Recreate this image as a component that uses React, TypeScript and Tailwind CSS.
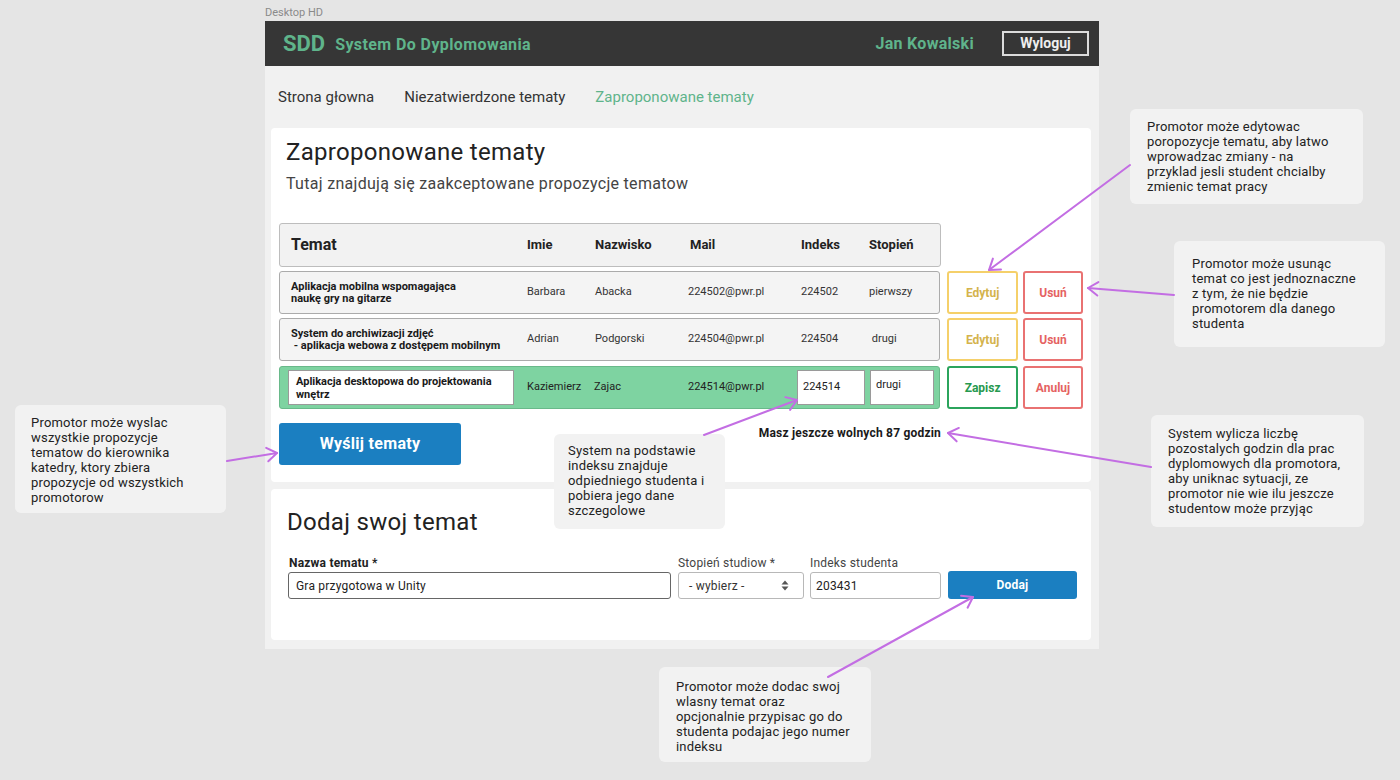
import React from "react";

const ARROWS = [
  { x1: 1130, y1: 165, x2: 989, y2: 270 },
  { x1: 1174, y1: 295, x2: 1088, y2: 288 },
  { x1: 1151, y1: 467, x2: 948, y2: 433 },
  { x1: 704, y1: 435, x2: 797, y2: 400 },
  { x1: 828, y1: 677, x2: 973, y2: 597 },
  { x1: 227, y1: 461, x2: 277, y2: 453 },
];

const ROWS = [
  {
    topic: ["Aplikacja mobilna wspomagająca", "naukę gry na gitarze"],
    imie: "Barbara",
    nazwisko: "Abacka",
    mail: "224502@pwr.pl",
    indeks: "224502",
    stopien: "pierwszy",
  },
  {
    topic: ["System do archiwizacji zdjęć", "\u00a0- aplikacja webowa z dostępem mobilnym"],
    imie: "Adrian",
    nazwisko: "Podgorski",
    mail: "224504@pwr.pl",
    indeks: "224504",
    stopien: "\u00a0drugi",
  },
];

function Arrow({ x1, y1, x2, y2 }: { x1: number; y1: number; x2: number; y2: number }) {
  const a = Math.atan2(y2 - y1, x2 - x1);
  const len = 12;
  const s = 0.6;
  const p1 = [x2 - len * Math.cos(a - s), y2 - len * Math.sin(a - s)];
  const p2 = [x2 - len * Math.cos(a + s), y2 - len * Math.sin(a + s)];
  return (
    <g stroke="#c36ee3" strokeWidth={2} fill="none" strokeLinecap="round" strokeLinejoin="round">
      <line x1={x1} y1={y1} x2={x2} y2={y2} />
      <polyline points={`${p1[0]},${p1[1]} ${x2},${y2} ${p2[0]},${p2[1]}`} />
    </g>
  );
}

function Note({ className, lines }: { className: string; lines: string[] }) {
  return (
    <div className={`absolute rounded-md bg-[#f2f2f2] text-[13px] leading-[15px] tracking-[0.2px] text-[#222] ${className}`}>
      {lines.map((l) => (
        <div key={l}>{l}</div>
      ))}
    </div>
  );
}

const COLS = "grid grid-cols-[236px_68px_95px_111px_68px_1fr] items-center";

export default function App() {
  return (
    <div className="relative h-[780px] w-[1400px] overflow-hidden bg-[#e5e5e5] font-['Roboto','Liberation_Sans',sans-serif]">
      <div className="absolute left-[265px] top-[5px] text-[11px] text-[#8a8a8a]">Desktop HD</div>

      {/* Frame */}
      <div className="absolute left-[265px] top-[21px] flex h-[628px] w-[834px] flex-col bg-[#f1f1f1]">
        <header className="flex h-[45px] items-center bg-[#363636] pl-[18px] pr-[10px]">
          <span className="text-[22px] font-bold text-[#5fb48b]">SDD</span>
          <span className="ml-[10px] mt-[3px] text-[16px] font-bold tracking-[0.4px] text-[#5fb48b]">
            System Do Dyplomowania
          </span>
          <span className="ml-auto text-[16px] font-bold tracking-[0.3px] text-[#5fb48b]">Jan Kowalski</span>
          <button className="ml-[28px] h-[25px] w-[87px] border-2 border-[#dcdcdc] text-[14px] font-bold text-[#eeeeee]">
            Wyloguj
          </button>
        </header>

        <nav className="flex h-[62px] items-center gap-[30px] pl-[13px] text-[15px] text-[#333]">
          <span>Strona głowna</span>
          <span>Niezatwierdzone tematy</span>
          <span className="text-[#5fb48b]">Zaproponowane tematy</span>
        </nav>

        {/* Card: proposed topics */}
        <section className="ml-[6px] w-[820px] rounded bg-white px-[8px] pb-[17px] pt-[10px]">
          <h1 className="pl-[7px] text-[24px] leading-[28px] tracking-[0.3px] text-[#222]">Zaproponowane tematy</h1>
          <p className="mt-[8px] pl-[7px] text-[16px] leading-[20px] tracking-[0.3px] text-[#444]">
            Tutaj znajdują się zaakceptowane propozycje tematow
          </p>

          <div className="mt-[29px] flex flex-col gap-[4px]">
            <div className="flex">
              <div className={`${COLS} h-[44px] w-[662px] rounded-[3px] border border-[#bdbdbd] bg-[#f2f2f2] pl-[11px] text-[13px] font-bold text-[#222]`}>
                <span className="text-[16px]">Temat</span>
                <span>Imie</span>
                <span>Nazwisko</span>
                <span>Mail</span>
                <span>Indeks</span>
                <span>Stopień</span>
              </div>
            </div>

            {ROWS.map((r) => (
              <div key={r.mail} className="flex gap-[5px]">
                <div className={`${COLS} h-[43px] w-[662px] rounded-[3px] border border-[#ababab] bg-[#f4f4f4] pl-[11px] text-[11px] text-[#333]`}>
                  <div className="text-[11px] font-bold leading-[12px] text-[#1a1a1a]">
                    {r.topic.map((t) => (
                      <div key={t} className="whitespace-pre">{t}</div>
                    ))}
                  </div>
                  <span>{r.imie}</span>
                  <span>{r.nazwisko}</span>
                  <span className="-ml-[2px]">{r.mail}</span>
                  <span>{r.indeks}</span>
                  <span className="whitespace-pre">{r.stopien}</span>
                </div>
                <button className="ml-[2px] h-[43px] w-[71px] rounded-[3px] border-2 border-[#f5d06a] text-[12px] font-bold text-[#d4b34c]">
                  Edytuj
                </button>
                <button className="h-[43px] w-[60px] rounded-[3px] border-2 border-[#e97272] text-[12px] font-bold text-[#e56262]">
                  Usuń
                </button>
              </div>
            ))}

            <div className="mt-[1px] flex gap-[5px]">
              <div className="flex h-[43px] w-[662px] items-center rounded-[3px] border border-[#69b98a] bg-[#7ed3a1] pl-[8px] text-[11px] text-[#222]">
                <div className="flex h-[35px] w-[226px] flex-col justify-center border border-[#9a9a9a] bg-white pl-[7px] text-[11px] font-bold leading-[13px] text-[#1a1a1a]">
                  <div>Aplikacja desktopowa do projektowania</div>
                  <div>wnętrz</div>
                </div>
                <span className="ml-[13px] w-[67px]">Kaziemierz</span>
                <span className="w-[94px]">Zajac</span>
                <span className="w-[109px]">224514@pwr.pl</span>
                <div className="flex h-[35px] w-[68px] items-center border border-[#9a9a9a] bg-white pl-[5px]">224514</div>
                <div className="ml-[5px] flex h-[35px] w-[64px] items-start border border-[#9a9a9a] bg-white pl-[5px] pt-[6px]">
                  drugi
                </div>
              </div>
              <button className="ml-[2px] h-[43px] w-[71px] rounded-[3px] border-2 border-[#2ba45c] text-[12px] font-bold text-[#27994f]">
                Zapisz
              </button>
              <button className="h-[43px] w-[60px] rounded-[3px] border-2 border-[#e97272] text-[12px] font-bold text-[#e56262]">
                Anuluj
              </button>
            </div>
          </div>

          <div className="mt-[14px] flex w-[662px] items-start justify-between">
            <button className="h-[42px] w-[182px] rounded-[3px] bg-[#1b7fc1] text-[16px] font-bold tracking-[0.3px] text-white">
              Wyślij tematy
            </button>
            <span className="mt-[1px] text-[12px] font-bold tracking-[0.2px] text-[#1a1a1a]">
              Masz jeszcze wolnych 87 godzin
            </span>
          </div>
        </section>

        {/* Card: add topic */}
        <section className="ml-[6px] mt-[7px] w-[820px] rounded bg-white pb-[41px] pl-[17px] pt-[19px]">
          <h2 className="-ml-px text-[24px] leading-[28px] tracking-[0.3px] text-[#222]">Dodaj swoj temat</h2>
          <div className="mt-[19px] flex items-end gap-[6px] text-[12px] tracking-[0.2px]">
            <label className="flex flex-col">
              <span className="pl-[1px] font-bold leading-[16px] text-[#222]">Nazwa tematu *</span>
              <div className="mt-px flex h-[27px] w-[383px] items-center rounded-[3px] border border-[#666] pl-[7px] text-[#222]">
                Gra przygotowa w Unity
              </div>
            </label>
            <label className="ml-px flex flex-col">
              <span className="leading-[16px] text-[#444]">Stopień studiow *</span>
              <div className="mt-px flex h-[27px] w-[126px] items-center rounded-[3px] border border-[#b8b8b8] pl-[10px] pr-[14px] text-[#333]">
                - wybierz -
                <svg className="ml-auto" width="8" height="11" viewBox="0 0 8 11">
                  <path d="M4 0.5 L7.5 4.5 H0.5 Z M4 10.5 L7.5 6.5 H0.5 Z" fill="#555" />
                </svg>
              </div>
            </label>
            <label className="flex flex-col">
              <span className="leading-[16px] text-[#444]">Indeks studenta</span>
              <div className="mt-px flex h-[27px] w-[131px] items-center rounded-[3px] border border-[#b8b8b8] pl-[5px] text-[#222]">
                203431
              </div>
            </label>
            <button className="ml-px h-[28px] w-[129px] rounded-[3px] bg-[#1b7fc1] text-[12px] font-bold text-white">
              Dodaj
            </button>
          </div>
        </section>
      </div>

      <Note
        className="left-[15px] top-[405px] h-[108px] w-[211px] pl-[16px] pt-[10px]"
        lines={[
          "Promotor może wyslac",
          "wszystkie propozycje",
          "tematow do kierownika",
          "katedry, ktory zbiera",
          "propozycje od wszystkich",
          "promotorow",
        ]}
      />
      <Note
        className="left-[1130px] top-[109px] h-[95px] w-[233px] pl-[17px] pt-[10px]"
        lines={[
          "Promotor może edytowac",
          "poropozycje tematu, aby latwo",
          "wprowadzac zmiany - na",
          "przyklad jesli student chcialby",
          "zmienic temat pracy",
        ]}
      />
      <Note
        className="left-[1174px] top-[241px] h-[106px] w-[211px] pl-[18px] pt-[15px]"
        lines={[
          "Promotor może usunąc",
          "temat co jest jednoznaczne",
          "z tym, że nie będzie",
          "promotorem dla danego",
          "studenta",
        ]}
      />
      <Note
        className="left-[1151px] top-[415px] h-[112px] w-[213px] pl-[17px] pt-[11px]"
        lines={[
          "System wylicza liczbę",
          "pozostalych godzin dla prac",
          "dyplomowych dla promotora,",
          "aby uniknac sytuacji, ze",
          "promotor nie wie ilu jeszcze",
          "studentow może przyjąc",
        ]}
      />
      <Note
        className="left-[554px] top-[434px] h-[95px] w-[171px] pl-[14px] pt-[9px]"
        lines={["System na podstawie", "indeksu znajduje", "odpiedniego studenta i", "pobiera jego dane", "szczegolowe"]}
      />
      <Note
        className="left-[659px] top-[667px] h-[95px] w-[212px] pl-[17px] pt-[12px]"
        lines={[
          "Promotor może dodac swoj",
          "wlasny temat oraz",
          "opcjonalnie przypisac go do",
          "studenta podajac jego numer",
          "indeksu",
        ]}
      />

      <svg className="pointer-events-none absolute inset-0" width="1400" height="780">
        {ARROWS.map((a, i) => (
          <Arrow key={i} {...a} />
        ))}
      </svg>
    </div>
  );
}
